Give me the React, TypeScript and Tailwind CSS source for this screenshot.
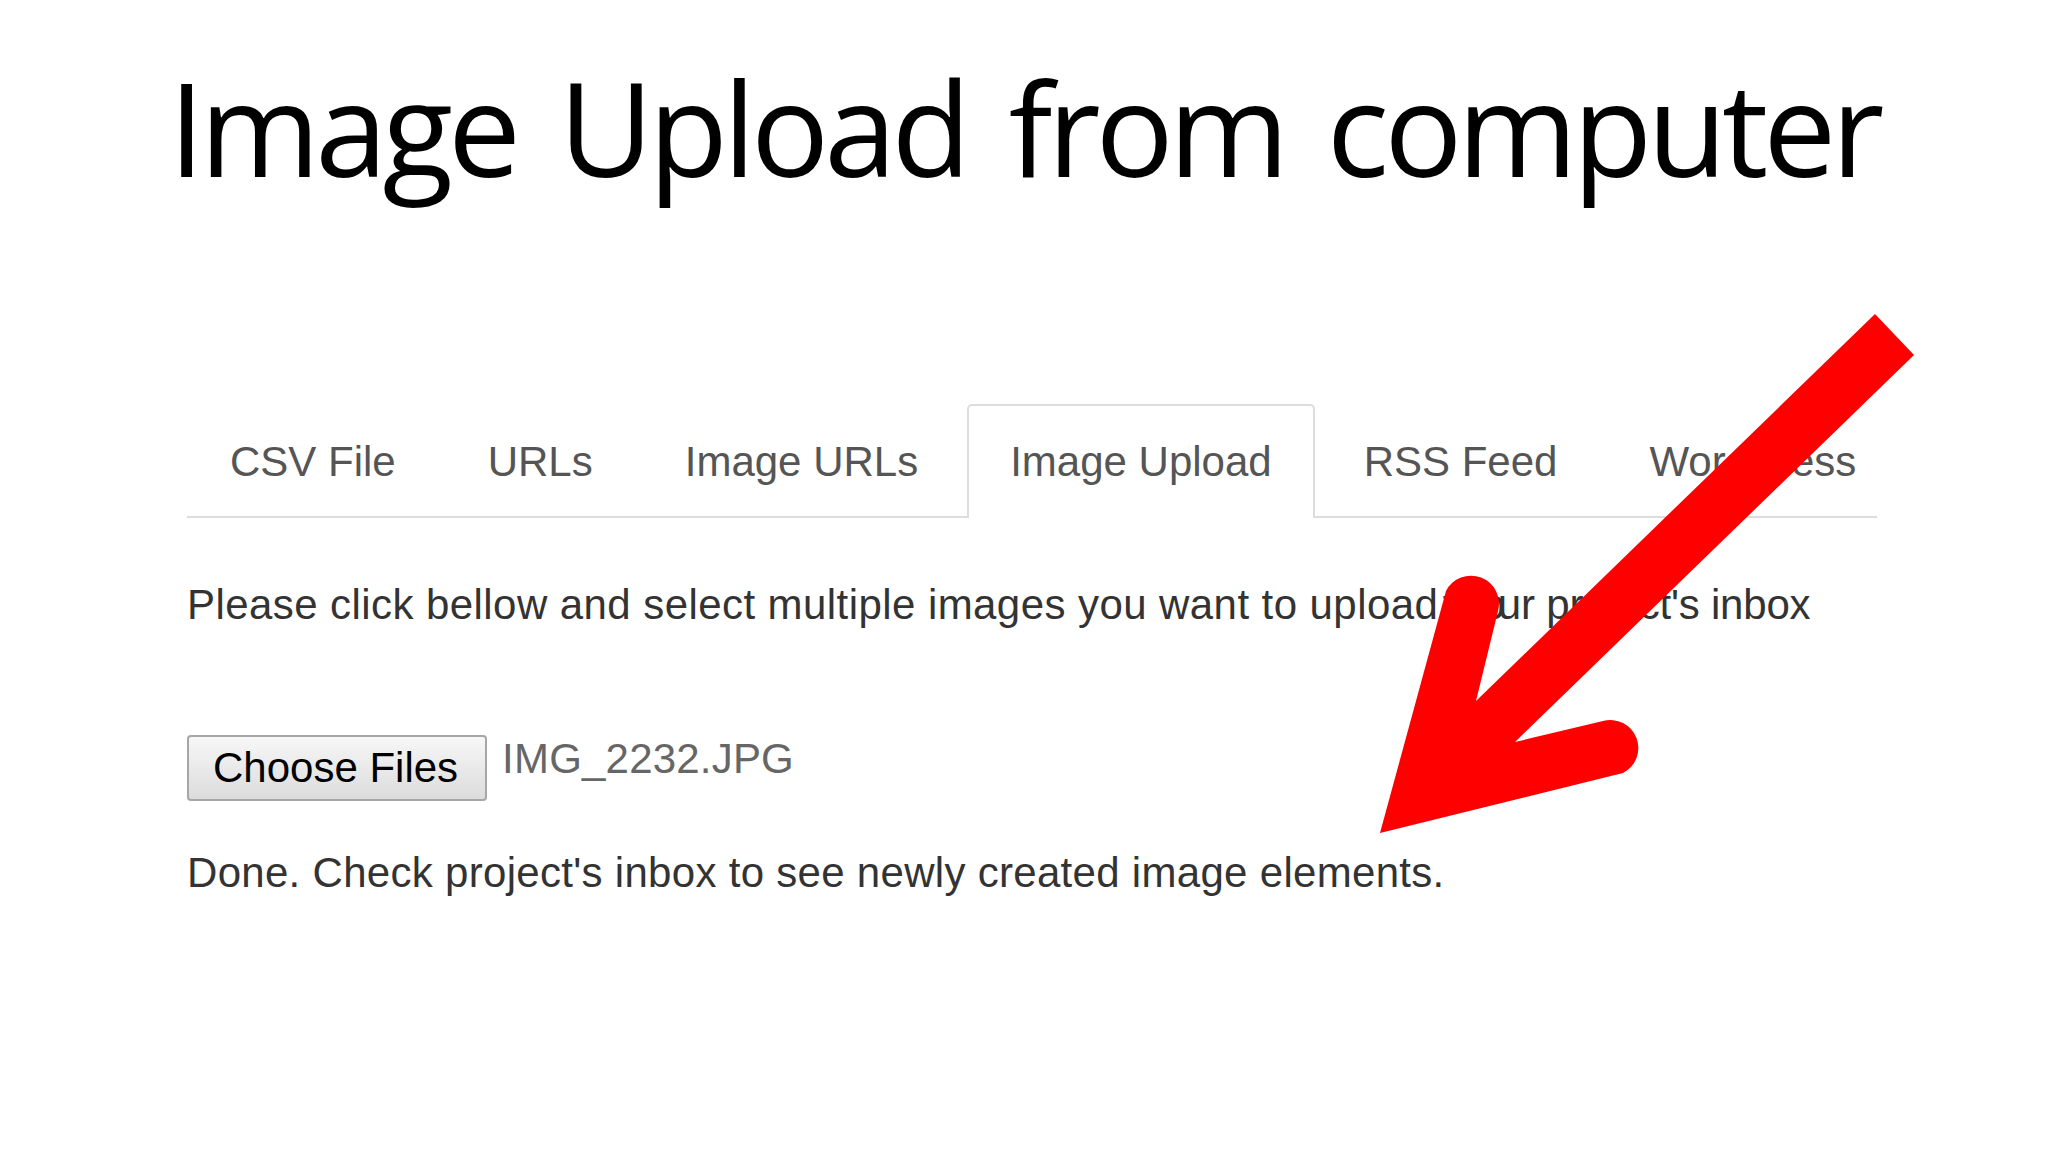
const tabs = ['CSV File', 'URLs', 'Image URLs', 'Image Upload', 'RSS Feed', 'WordPress'];

function RedArrow() {
  return (
    <svg
      className="pointer-events-none absolute left-0 top-0"
      width="2048"
      height="1152"
      viewBox="0 0 2048 1152"
    >
      <path
        fill="#ff0000"
        d="M1380 833 L1446 591 A28 28 0 0 1 1498 611 L1476 701 L1875 314 L1914 355 L1515 742 L1603 721 A28 28 0 0 1 1623 773 Z"
      />
    </svg>
  );
}

export default function App() {
  return (
    <main className="relative h-[1152px] w-[2048px] overflow-hidden bg-white">
      <h1 className="pt-[62px] text-center font-['Open_Sans',sans-serif] text-[130px] font-normal leading-[130px] tracking-[-5px] text-black [word-spacing:14px]">
        Image Upload from computer
      </h1>

      <section className="ml-[187px] mt-[212px] w-[1690px] font-['Liberation_Sans',Arial,sans-serif] text-[42px] leading-[48px]">
        <ul className="flex items-end whitespace-nowrap border-b-2 border-[#dddddd]">
          {tabs.map((tab) => {
            const active = tab === 'Image Upload';
            return (
              <li
                key={tab}
                className={
                  active
                    ? 'mr-[6px] -mb-[2px] shrink-0 rounded-t-[5px] border-2 border-b-0 border-[#dddddd] bg-white px-[41px] pb-[32px] pt-[32px] text-[#555555]'
                    : 'mr-[6px] shrink-0 border-2 border-b-0 border-transparent px-[41px] pb-[30px] pt-[32px] text-[#555555]'
                }
              >
                {tab}
              </li>
            );
          })}
        </ul>

        <p className="mt-[63px] whitespace-nowrap tracking-[-0.2px] text-[#333333]">
          <span className="tracking-[0.43px]">Please click bellow and select multiple images you want to upload</span>
          <span className="tracking-[-7.2px]"> to yo</span>
          <span>ur project's inbox</span>
        </p>

        <div className="mt-[106px] flex items-start">
          <button className="h-[66px] rounded-[4px] border-2 border-[#a6a6a6] bg-gradient-to-b from-[#f7f7f7] to-[#dcdcdc] pl-[24px] pr-[27px] text-[42px] leading-[48px] text-black">
            Choose Files
          </button>
          <span className="ml-[15px] text-[42px] tracking-[0.2px] text-[#666666]">IMG_2232.JPG</span>
        </div>

        <p className="mt-[48px] whitespace-nowrap tracking-[0.3px] text-[#333333]">
          Done. Check project's inbox to see newly created image elements.
        </p>
      </section>

      <RedArrow />
    </main>
  );
}
